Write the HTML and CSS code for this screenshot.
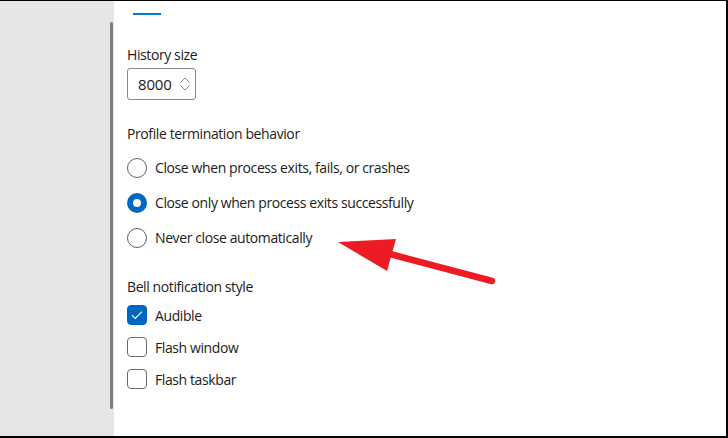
FILE: index.html
```html
<!DOCTYPE html>
<html lang="en">
<head>
    <meta charset="UTF-8">
    <title>Profile settings</title>
    <link rel="stylesheet" href="styles.css">
</head>
<body>
    <div class="janela">
        <!-- Painel lateral com a barra de rolagem -->
        <div class="lateral">
            <div class="rolagem"></div>
        </div>

        <!-- Conteúdo das configurações -->
        <div class="conteudo">
            <div class="aba-ativa"></div>

            <div class="rotulo historico">History size</div>
            <div class="caixa-numero">
                <span>8000</span>
                <svg width="12" height="16" viewBox="0 0 12 16">
                    <path d="M1.5 6.5 L6 2 L10.5 6.5" fill="none" stroke="#8a8a8a" stroke-width="1"/>
                    <path d="M1.5 9.5 L6 14 L10.5 9.5" fill="none" stroke="#8a8a8a" stroke-width="1"/>
                </svg>
            </div>

            <div class="rotulo secao">Profile termination behavior</div>
            <div class="grupo-radio">
                <div class="opcao-radio">
                    <span class="radio"></span>
                    <span>Close when process exits, fails, or crashes</span>
                </div>
                <div class="opcao-radio">
                    <span class="radio marcado"></span>
                    <span>Close only when process exits successfully</span>
                </div>
                <div class="opcao-radio">
                    <span class="radio"></span>
                    <span>Never close automatically</span>
                </div>
            </div>

            <div class="rotulo sino">Bell notification style</div>
            <div class="grupo-check">
                <div class="opcao-check">
                    <span class="check marcado">
                        <svg width="12" height="10" viewBox="0 0 12 10">
                            <path d="M1 5.2 L4.2 8.4 L11 1.6" fill="none" stroke="#fff" stroke-width="1.1"/>
                        </svg>
                    </span>
                    <span>Audible</span>
                </div>
                <div class="opcao-check">
                    <span class="check"></span>
                    <span>Flash window</span>
                </div>
                <div class="opcao-check">
                    <span class="check"></span>
                    <span>Flash taskbar</span>
                </div>
            </div>
        </div>

        <!-- Seta vermelha de destaque -->
        <svg class="seta" width="728" height="438" viewBox="0 0 728 438">
            <line x1="390" y1="254" x2="492" y2="281" stroke="#ed1c24" stroke-width="6.5" stroke-linecap="round"/>
            <polygon points="338,242 396,239 387,271" fill="#ed1c24"/>
        </svg>
    </div>
</body>
</html>
```

FILE: styles.css
```css
/* Estilos gerais */
body {
    margin: 0;
    font-family: "Segoe UI", "Open Sans", sans-serif;
    color: #1b1b1b;
    background-color: #fff;
}

.janela {
    position: relative;
    box-sizing: border-box;
    width: 728px;
    height: 438px;
    display: flex;
    border-top: 1px solid #000;
    border-right: 2px solid #000;
    border-bottom: 2px solid #000;
    background-color: #fff;
    overflow: hidden;
}

/* Painel lateral */
.lateral {
    width: 114px;
    flex-shrink: 0;
    background-color: #e6e6e6;
    display: flex;
    justify-content: flex-end;
    padding: 21px 1px 27px 0;
    box-sizing: border-box;
}

.rolagem {
    width: 3px;
    height: 100%;
    background-color: #808080;
    border-radius: 2px;
}

/* Conteúdo */
.conteudo {
    padding-left: 13px;
    display: flex;
    flex-direction: column;
    align-items: flex-start;
    font-size: 14px;
    letter-spacing: -0.4px;
}

.aba-ativa {
    width: 28px;
    height: 2px;
    margin: 12px 0 0 6px;
    background-color: #0078d4;
}

.rotulo {
    line-height: 20px;
    height: 20px;
}

.historico {
    margin-top: 30px;
}

.caixa-numero {
    margin-top: 3px;
    box-sizing: border-box;
    width: 69px;
    height: 32px;
    border: 1px solid #8a8a8a;
    border-radius: 3px;
    display: flex;
    align-items: center;
    padding-left: 10px;
    gap: 7px;
    font-size: 15px;
    letter-spacing: -0.2px;
}

.secao {
    margin-top: 24px;
}

/* Botões de rádio */
.grupo-radio {
    margin-top: 6px;
}

.opcao-radio {
    height: 35px;
    display: flex;
    align-items: center;
    gap: 8px;
}

.radio {
    box-sizing: border-box;
    width: 20px;
    height: 20px;
    border: 1px solid #5f5f5f;
    border-radius: 50%;
    background-color: #fff;
}

.radio.marcado {
    border: 6px solid #0067c0;
}

/* Caixas de seleção */
.sino {
    margin-top: 22px;
}

.grupo-check {
    margin-top: 2px;
}

.opcao-check {
    height: 32px;
    display: flex;
    align-items: center;
    gap: 8px;
}

.check {
    box-sizing: border-box;
    width: 20px;
    height: 20px;
    border: 1px solid #6b6b6b;
    border-radius: 4px;
    display: flex;
    align-items: center;
    justify-content: center;
}

.check.marcado {
    background-color: #0067c0;
    border-color: #0067c0;
}

/* Seta sobreposta */
.seta {
    position: absolute;
    top: -1px;
    left: 0;
    pointer-events: none;
}
```
